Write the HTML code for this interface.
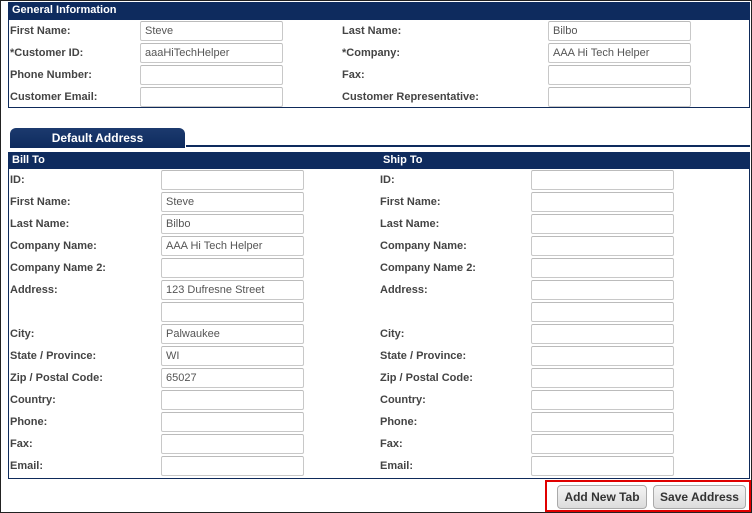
<!DOCTYPE html>
<html><head><meta charset="utf-8"><style>
*{margin:0;padding:0;box-sizing:border-box}
body{width:752px;height:513px;position:relative;background:#fff;overflow:hidden;font-family:"Liberation Sans",Arial,sans-serif}
.a{position:absolute}
.box{position:absolute;border:1px solid #0e2a5a;border-top:none}
.hd{position:absolute;background:#0e2b5e;color:#fff;font-weight:bold;font-size:11px;line-height:17px;padding-left:4px}
.l{position:absolute;font-weight:bold;font-size:11px;color:#444;line-height:14px}
.i{position:absolute;width:143px;height:20px;border:1px solid #c8c8c8;border-top-color:#bbb;background:#fff;font-size:11px;color:#555;line-height:18px;padding-left:4px;border-radius:2px}
.btn{position:absolute;height:24px;border:1px solid #aaa;border-radius:4px;background:linear-gradient(#f4f4f4,#dcdcdc);font-weight:bold;font-size:12px;color:#333;text-align:center;line-height:22px}
</style></head><body>
<div class="box" style="left:8px;top:2px;width:742px;height:106px"></div>
<div class="hd" style="left:8px;top:2px;width:742px;height:18px">General Information</div>

<div class="l" style="left:10px;top:24px">First Name:</div><div class="i" style="left:140px;top:21px">Steve</div>
<div class="l" style="left:10px;top:46px">*Customer ID:</div><div class="i" style="left:140px;top:43px">aaaHiTechHelper</div>
<div class="l" style="left:10px;top:68px">Phone Number:</div><div class="i" style="left:140px;top:65px"></div>
<div class="l" style="left:10px;top:90px">Customer Email:</div><div class="i" style="left:140px;top:87px"></div>
<div class="l" style="left:342px;top:24px">Last Name:</div><div class="i" style="left:548px;top:21px">Bilbo</div>
<div class="l" style="left:342px;top:46px">*Company:</div><div class="i" style="left:548px;top:43px">AAA Hi Tech Helper</div>
<div class="l" style="left:342px;top:68px">Fax:</div><div class="i" style="left:548px;top:65px"></div>
<div class="l" style="left:342px;top:90px">Customer Representative:</div><div class="i" style="left:548px;top:87px"></div>

<div class="a" style="left:10px;top:128px;width:175px;height:20px;background:linear-gradient(#1c3a6e,#0e2b5e);border-radius:6px 6px 0 0;color:#fff;font-weight:bold;font-size:12px;line-height:20px;text-align:center">Default Address</div>
<div class="a" style="left:186px;top:145px;width:564px;height:2px;background:#0e2b5e"></div>

<div class="box" style="left:8px;top:152px;width:742px;height:327px"></div>
<div class="hd" style="left:8px;top:152px;width:742px;height:17px">Bill To<span style="position:absolute;left:375px">Ship To</span></div>

<div class="l" style="left:10px;top:173px">ID:</div><div class="i" style="left:161px;top:170px"></div>
<div class="l" style="left:10px;top:195px">First Name:</div><div class="i" style="left:161px;top:192px">Steve</div>
<div class="l" style="left:10px;top:217px">Last Name:</div><div class="i" style="left:161px;top:214px">Bilbo</div>
<div class="l" style="left:10px;top:239px">Company Name:</div><div class="i" style="left:161px;top:236px">AAA Hi Tech Helper</div>
<div class="l" style="left:10px;top:261px">Company Name 2:</div><div class="i" style="left:161px;top:258px"></div>
<div class="l" style="left:10px;top:283px">Address:</div><div class="i" style="left:161px;top:280px">123 Dufresne Street</div>
<div class="i" style="left:161px;top:302px"></div>
<div class="l" style="left:10px;top:327px">City:</div><div class="i" style="left:161px;top:324px">Palwaukee</div>
<div class="l" style="left:10px;top:349px">State / Province:</div><div class="i" style="left:161px;top:346px">WI</div>
<div class="l" style="left:10px;top:371px">Zip / Postal Code:</div><div class="i" style="left:161px;top:368px">65027</div>
<div class="l" style="left:10px;top:393px">Country:</div><div class="i" style="left:161px;top:390px"></div>
<div class="l" style="left:10px;top:415px">Phone:</div><div class="i" style="left:161px;top:412px"></div>
<div class="l" style="left:10px;top:437px">Fax:</div><div class="i" style="left:161px;top:434px"></div>
<div class="l" style="left:10px;top:459px">Email:</div><div class="i" style="left:161px;top:456px"></div>

<div class="l" style="left:380px;top:173px">ID:</div><div class="i" style="left:531px;top:170px"></div>
<div class="l" style="left:380px;top:195px">First Name:</div><div class="i" style="left:531px;top:192px"></div>
<div class="l" style="left:380px;top:217px">Last Name:</div><div class="i" style="left:531px;top:214px"></div>
<div class="l" style="left:380px;top:239px">Company Name:</div><div class="i" style="left:531px;top:236px"></div>
<div class="l" style="left:380px;top:261px">Company Name 2:</div><div class="i" style="left:531px;top:258px"></div>
<div class="l" style="left:380px;top:283px">Address:</div><div class="i" style="left:531px;top:280px"></div>
<div class="i" style="left:531px;top:302px"></div>
<div class="l" style="left:380px;top:327px">City:</div><div class="i" style="left:531px;top:324px"></div>
<div class="l" style="left:380px;top:349px">State / Province:</div><div class="i" style="left:531px;top:346px"></div>
<div class="l" style="left:380px;top:371px">Zip / Postal Code:</div><div class="i" style="left:531px;top:368px"></div>
<div class="l" style="left:380px;top:393px">Country:</div><div class="i" style="left:531px;top:390px"></div>
<div class="l" style="left:380px;top:415px">Phone:</div><div class="i" style="left:531px;top:412px"></div>
<div class="l" style="left:380px;top:437px">Fax:</div><div class="i" style="left:531px;top:434px"></div>
<div class="l" style="left:380px;top:459px">Email:</div><div class="i" style="left:531px;top:456px"></div>

<div class="a" style="left:545px;top:480px;width:206px;height:32px;border:2px solid #e00000"></div>
<div class="btn" style="left:557px;top:485px;width:90px">Add New Tab</div>
<div class="btn" style="left:653px;top:485px;width:93px">Save Address</div>
<div class="a" style="left:0;top:0;width:752px;height:513px;border:1px solid #222;pointer-events:none"></div>
</body></html>
